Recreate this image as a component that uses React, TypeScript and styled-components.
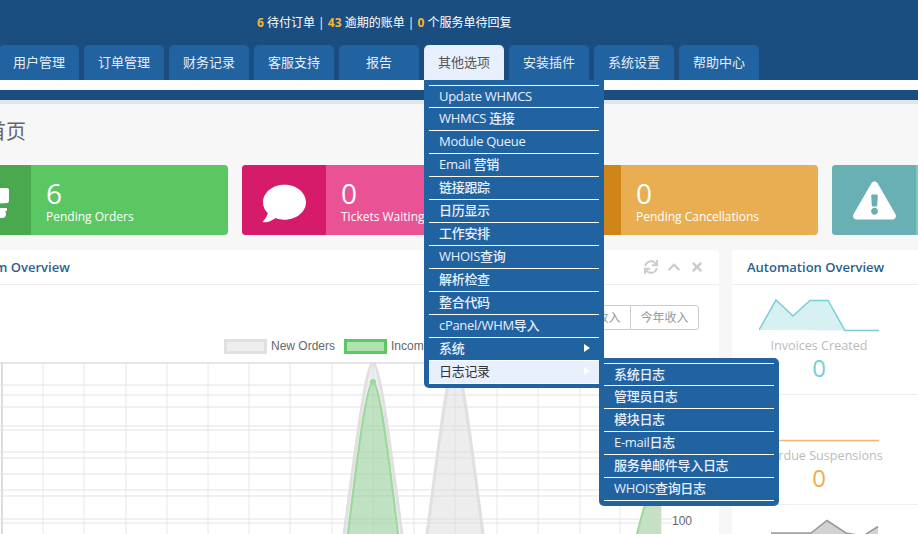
import React from "react";
import styled, { createGlobalStyle } from "styled-components";
import { FaComment, FaExclamationTriangle, FaSync, FaChevronUp, FaTimes } from "react-icons/fa";

const FONT = `"Open Sans", "Noto Sans CJK SC", sans-serif`;

const GlobalStyle = createGlobalStyle`
  html, body {
    margin: 0;
    padding: 0;
    background: #f7f7f7;
    overflow: hidden;
  }
  * {
    box-sizing: border-box;
  }
`;

const Page = styled.div`
  width: 918px;
  height: 534px;
  overflow: hidden;
  background: #f7f7f7;
  font-family: ${FONT};
  font-size: 13px;
`;

const Header = styled.header`
  height: 80px;
  background: #1a4d80;
`;

const Stats = styled.div`
  height: 45px;
  padding-left: 257px;
  line-height: 45px;
  font-size: 12px;
  color: #fff;
`;

const Count = styled.b`
  color: #f5b82e;
  font-weight: 700;
`;

const Nav = styled.nav`
  display: flex;
  gap: 5px;
  margin-left: -1px;
`;

const NavItem = styled.div`
  position: relative;
`;

const Tab = styled.div<{ $active?: boolean }>`
  width: 80px;
  height: 35px;
  border-radius: 5px 5px 0 0;
  background: ${(p) => (p.$active ? "#e8f0fe" : "#2162a1")};
  color: ${(p) => (p.$active ? "#555" : "#e6eef8")};
  line-height: 35px;
  text-align: center;
`;

const Menu = styled.ul`
  position: absolute;
  z-index: 5;
  left: 0;
  top: 35px;
  width: 180px;
  margin: 0;
  padding: 5px 5px 4px;
  list-style: none;
  background: #2162a1;
  border-radius: 0 0 5px 5px;
`;

const MenuList = styled.div`
  border-top: 1px solid #fff;
`;

const MenuItem = styled.li<{ $active?: boolean; $arrow?: boolean }>`
  position: relative;
  height: 23px;
  padding-left: 10px;
  line-height: 21px;
  letter-spacing: -0.3px;
  border-bottom: 1px solid #fff;
  color: ${(p) => (p.$active ? "#333" : "#e8f0fe")};
  background: ${(p) => (p.$active ? "#e8f0fe" : "transparent")};
  font-weight: ${(p) => (p.$active ? 400 : 500)};

  &:first-child {
    height: 22px;
  }

  ${(p) =>
    p.$arrow &&
    `
    &::after {
      content: "";
      position: absolute;
      left: 155px;
      top: 6px;
      border-left: 6px solid #fff;
      border-top: 4px solid transparent;
      border-bottom: 4px solid transparent;
    }
  `}
`;

const SubMenu = styled.ul`
  position: absolute;
  z-index: 6;
  left: 170px;
  top: -3px;
  width: 180px;
  margin: 0;
  padding: 5px;
  list-style: none;
  background: #2162a1;
  border-radius: 5px;
`;

const Stripe = styled.div`
  height: 20px;
  background: #fff;
  padding-top: 10px;
`;

const StripeBar = styled.div`
  height: 10px;
  background: #1a4d80;
`;

const Main = styled.main`
  margin-left: -53px;
  border-top: 4px solid #e2e5e8;
  width: 1400px;
`;

const Title = styled.h1`
  margin: 0;
  height: 61px;
  padding: 14px 0 0 39px;
  font-size: 20px;
  line-height: 28px;
  font-weight: 400;
  color: #666;
`;

const Cards = styled.div`
  display: flex;
  gap: 14px;
`;

const Card = styled.div<{ $bg: string }>`
  display: flex;
  width: 281px;
  height: 70px;
  border-radius: 4px;
  overflow: hidden;
  background: ${(p) => p.$bg};
  color: #fff;
`;

const CardIcon = styled.div<{ $bg: string; $drop?: number }>`
  display: flex;
  align-items: center;
  justify-content: center;
  flex: 0 0 84px;
  padding-top: ${(p) => p.$drop ?? 0}px;
  background: ${(p) => p.$bg};
  font-size: 43px;
`;

const CardBody = styled.div`
  padding: 12px 0 0 15px;
`;

const CardValue = styled.div`
  font-size: 28px;
  line-height: 32px;
`;

const CardLabel = styled.div`
  font-size: 12px;
  line-height: 16px;
  white-space: nowrap;
`;

const Panels = styled.div`
  display: flex;
  gap: 13px;
  margin-top: 15px;
`;

const Panel = styled.section<{ $width: number }>`
  width: ${(p) => p.$width}px;
  height: 300px;
  background: #fff;
  border-radius: 4px 4px 0 0;
  overflow: hidden;
`;

const PanelHead = styled.div`
  display: flex;
  align-items: center;
  justify-content: space-between;
  height: 35px;
  padding: 0 15px;
  border-bottom: 1px solid #eee;
`;

const PanelTitle = styled.h3`
  margin: 0;
  font-size: 13px;
  font-weight: 600;
  color: #2a5f8f;
`;

const PanelTools = styled.div`
  display: flex;
  align-items: center;
  gap: 9px;
  color: #ccc;
  font-size: 14px;
`;

const Toolbar = styled.div`
  display: flex;
  justify-content: flex-end;
  padding: 20px 20px 0 0;
`;

const RangeButton = styled.div`
  width: 69px;
  height: 25px;
  margin-left: -1px;
  border: 1px solid #ccc;
  background: #fff;
  color: #999;
  font-size: 12px;
  line-height: 23px;
  text-align: center;

  &:last-child {
    border-radius: 0 3px 3px 0;
  }
`;

const Legend = styled.div`
  display: flex;
  gap: 9px;
  height: 15px;
  margin-top: 9px;
  padding-left: 277px;
  font-family: "Liberation Sans", sans-serif;
  font-size: 12px;
  line-height: 14px;
  color: #666;
`;

const LegendEntry = styled.div`
  display: flex;
  gap: 4px;
`;

const Swatch = styled.span<{ $fill: string; $line: string }>`
  width: 43px;
  height: 15px;
  background: ${(p) => p.$fill};
  border: 3px solid ${(p) => p.$line};
`;

const Chart = styled.svg`
  display: block;
  margin-top: 8px;
`;

const AutoRow = styled.div`
  width: 174px;
  height: 109px;
  padding-top: 10px;
  text-align: center;
`;

const RowRule = styled.div`
  border-bottom: 1px solid #eee;
`;

const Spark = styled.svg`
  display: block;
  width: 120px;
  height: 42px;
  margin: 0 auto;
`;

const AutoLabel = styled.div`
  height: 18px;
  font-size: 12.6px;
  line-height: 18px;
  color: #bbb;
  white-space: nowrap;
`;

const AutoValue = styled.div<{ $color: string }>`
  font-size: 24px;
  line-height: 26px;
  color: ${(p) => p.$color};
`;

const mainMenu = [
  "Update WHMCS",
  "WHMCS 连接",
  "Module Queue",
  "Email 营销",
  "链接跟踪",
  "日历显示",
  "工作安排",
  "WHOIS查询",
  "解析检查",
  "整合代码",
  "cPanel/WHM导入",
];

const logMenu = ["系统日志", "管理员日志", "模块日志", "E-mail日志", "服务单邮件导入日志", "WHOIS查询日志"];

const tabs = ["用户管理", "订单管理", "财务记录", "客服支持", "报告", "其他选项", "安装插件", "系统设置", "帮助中心"];

const gridX = [2, 43, 84, 126, 167, 208, 249, 290, 332, 373, 414, 455, 497, 538, 580, 620, 661];
const gridY = [363, 385, 395, 407, 426, 430, 452, 458, 474, 490, 496, 519, 523];

// one chart.js style peak, in page coordinates
const peak = (cx: number, top: number, half: number) =>
  `M${cx - half - 8} 565 L${cx - half} 534 C${cx - half * 0.6} 450 ${cx - half * 0.25} ${top} ${cx} ${top} ` +
  `C${cx + half * 0.25} ${top} ${cx + half * 0.6} 450 ${cx + half} 534 L${cx + half + 8} 565 Z`;

const OverviewChart = () => (
  <Chart width={772} height={172} viewBox="-53 362 772 172">
    {gridX.map((x) => (
      <line key={x} x1={x} x2={x} y1={363} y2={534} stroke={x === 2 ? "#bbb" : "#e8e8e8"} />
    ))}
    {gridY.map((y) => (
      <line key={y} x1={-10} x2={672} y1={y} y2={y} stroke={y === 363 ? "#ccc" : "#e2e2e2"} />
    ))}
    <path d={peak(455, 363, 28)} fill="rgba(220,220,220,0.5)" stroke="#e0e0e0" strokeWidth={3} />
    <path d={peak(373, 363, 29)} fill="rgba(220,220,220,0.5)" stroke="#e0e0e0" strokeWidth={3} />
    <path d={peak(373, 382, 25)} fill="rgba(92,199,99,0.3)" stroke="#9bd89b" strokeWidth={2} />
    <circle cx={373} cy={363} r={3} fill="#e0e0e0" />
    <circle cx={373} cy={382} r={3} fill="#9bd89b" />
    <path d="M661 480 C652 480 646 498 637 534 L630 560 L661 560 Z" fill="#c6e0c4" />
    <path d="M661 480 C652 480 646 498 637 534" fill="none" stroke="#9bd89b" strokeWidth={2} />
    <text x={672} y={525} fontFamily="Liberation Sans, sans-serif" fontSize={12} fill="#666">
      100
    </text>
  </Chart>
);

const CartIcon = () => (
  <svg width={44} height={44} viewBox="0 0 44 44" fill="#fff">
    <path d="M0 3h7l2 7h31a2 2 0 0 1 2 2v11a2 2 0 0 1-2 2l-26 2 1 3h25v3H11L5 6H0z" />
    <circle cx={16} cy={36} r={4} />
    <circle cx={35} cy={36} r={4} />
  </svg>
);

const App: React.FC = () => (
  <Page>
    <GlobalStyle />
    <Header>
      <Stats>
        <Count>6</Count> 待付订单 | <Count>43</Count> 逾期的账单 | <Count>0</Count> 个服务单待回复
      </Stats>
      <Nav>
        {tabs.map((t) => (
          <NavItem key={t}>
            <Tab $active={t === "其他选项"}>{t}</Tab>
            {t === "其他选项" && (
              <Menu>
                <MenuList>
                  {mainMenu.map((m) => (
                    <MenuItem key={m}>{m}</MenuItem>
                  ))}
                  <MenuItem $arrow>系统</MenuItem>
                  <MenuItem $active $arrow>
                    日志记录
                    <SubMenu>
                      <MenuList>
                        {logMenu.map((m) => (
                          <MenuItem key={m}>{m}</MenuItem>
                        ))}
                      </MenuList>
                    </SubMenu>
                  </MenuItem>
                </MenuList>
              </Menu>
            )}
          </NavItem>
        ))}
      </Nav>
    </Header>
    <Stripe>
      <StripeBar />
    </Stripe>
    <Main>
      <Title>首页</Title>
      <Cards>
        <Card $bg="#5bc763">
          <CardIcon $bg="#4aa84e">
            <CartIcon />
          </CardIcon>
          <CardBody>
            <CardValue>6</CardValue>
            <CardLabel>Pending Orders</CardLabel>
          </CardBody>
        </Card>
        <Card $bg="#ea5296">
          <CardIcon $bg="#d51b69" $drop={6}>
            <FaComment />
          </CardIcon>
          <CardBody>
            <CardValue>0</CardValue>
            <CardLabel>Tickets Waiting</CardLabel>
          </CardBody>
        </Card>
        <Card $bg="#e9ae52">
          <CardIcon $bg="#cf8518" />
          <CardBody>
            <CardValue>0</CardValue>
            <CardLabel>Pending Cancellations</CardLabel>
          </CardBody>
        </Card>
        <Card $bg="#7fc9c8">
          <CardIcon $bg="#68b0b3">
            <FaExclamationTriangle />
          </CardIcon>
        </Card>
      </Cards>
      <Panels>
        <Panel $width={772}>
          <PanelHead>
            <PanelTitle>System Overview</PanelTitle>
            <PanelTools>
              <FaSync />
              <FaChevronUp />
              <FaTimes />
            </PanelTools>
          </PanelHead>
          <Toolbar>
            <RangeButton>今日收入</RangeButton>
            <RangeButton>本月收入</RangeButton>
            <RangeButton>今年收入</RangeButton>
          </Toolbar>
          <Legend>
            <LegendEntry>
              <Swatch $fill="#eee" $line="#e0e0e0" />
              New Orders
            </LegendEntry>
            <LegendEntry>
              <Swatch $fill="#aee3ae" $line="#5cc763" />
              Income
            </LegendEntry>
          </Legend>
          <OverviewChart />
        </Panel>
        <Panel $width={281}>
          <PanelHead>
            <PanelTitle>Automation Overview</PanelTitle>
          </PanelHead>
          <RowRule>
            <AutoRow>
              <Spark viewBox="0 0 120 42">
                <path d="M0 35 L17 5 L34 21 L51 5.5 L69 5.5 L86 35.5 L120 35.5 Z" fill="#d7f0f2" stroke="none" />
                <path d="M0 35 L17 5 L34 21 L51 5.5 L69 5.5 L86 35.5 L120 35.5" fill="none" stroke="#76cfd4" strokeWidth={1.5} />
              </Spark>
              <AutoLabel>Invoices Created</AutoLabel>
              <AutoValue $color="#76cfd4">0</AutoValue>
            </AutoRow>
          </RowRule>
          <RowRule>
            <AutoRow>
              <Spark viewBox="0 0 120 42">
                <path d="M0 35.5 L120 35.5" fill="none" stroke="#f8b76b" strokeWidth={1.5} />
              </Spark>
              <AutoLabel>Overdue Suspensions</AutoLabel>
              <AutoValue $color="#f0ad4e">0</AutoValue>
            </AutoRow>
          </RowRule>
          <AutoRow>
            <Spark viewBox="0 0 120 42">
              <path d="M12 18 L52 18 L68 5.5 L87 18 L104 21 L119 11.5 L119 42 L12 42 Z" fill="#d2d2d2" />
              <path d="M12 18 L52 18 L68 5.5 L87 18 L104 21 L119 11.5" fill="none" stroke="#999" strokeWidth={1.5} />
            </Spark>
          </AutoRow>
        </Panel>
      </Panels>
    </Main>
  </Page>
);

export default App;
